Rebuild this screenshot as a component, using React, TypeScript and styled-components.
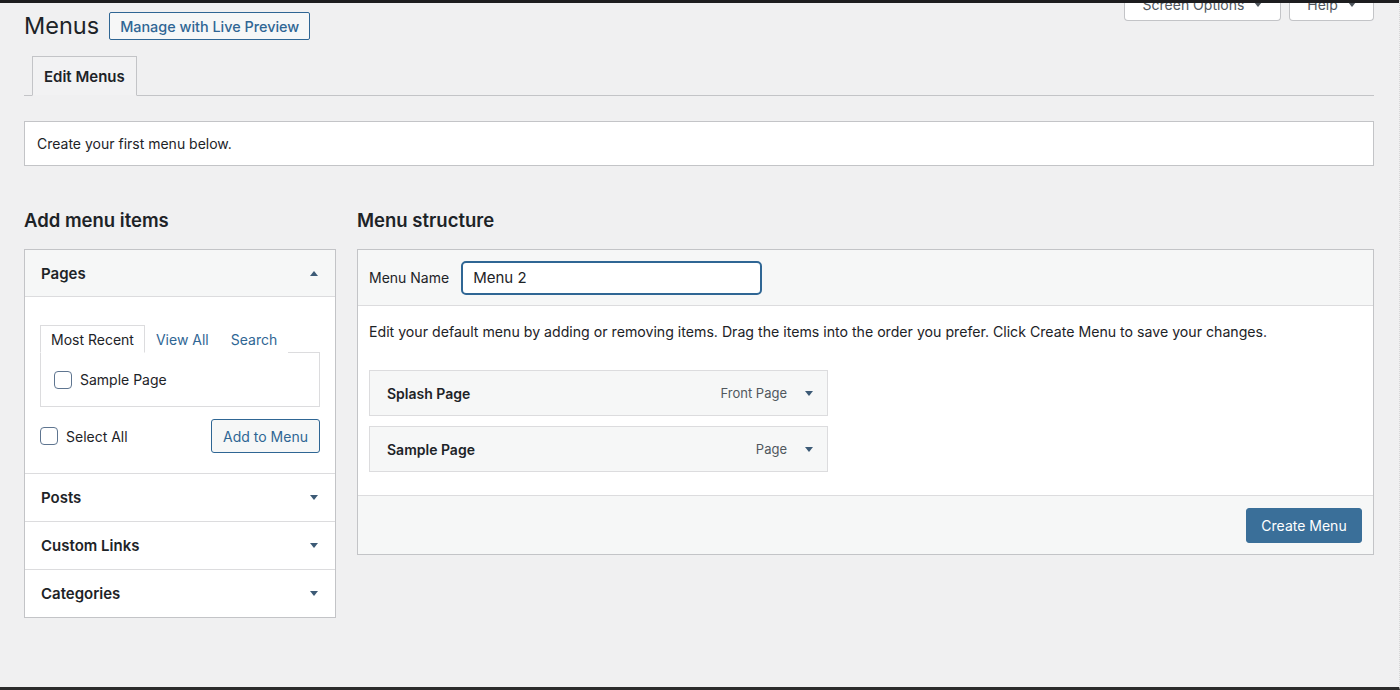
import React from "react";
import styled, { createGlobalStyle } from "styled-components";

const Global = createGlobalStyle`
  html, body { margin: 0; padding: 0; background: #f0f0f1; }
  body {
    font-family: Inter, "Liberation Sans", Arial, sans-serif;
    font-size: 14px;
    color: #1d2327;
  }
  * { box-sizing: border-box; }
`;

const Frame = styled.div`
  width: 1400px;
  height: 690px;
  overflow: hidden;
  display: flex;
  flex-direction: column;
  background: #f0f0f1;
  border-bottom: 3px solid #2c2c2c;
  border-right: 1px dotted #d6d6d6;
`;

const TopBar = styled.div`
  height: 3px;
  background: #1d1d1f;
  position: relative;
  z-index: 3;
  flex: none;
`;

const Wrap = styled.div`
  position: relative;
  flex: 1;
  padding: 6px 25px 0 24px;
`;

const ScreenMeta = styled.div`
  position: absolute;
  top: -8px;
  right: 25px;
  display: flex;
  gap: 8px;
`;

const MetaButton = styled.button<{ $w: number }>`
  width: ${(p) => p.$w}px;
  height: 26px;
  padding: 0 0 6px;
  display: flex;
  align-items: center;
  justify-content: center;
  gap: 10px;
  background: #fff;
  border: 1px solid #c3c4c7;
  border-top: none;
  border-radius: 0 0 4px 4px;
  font: inherit;
  font-size: 14px;
  color: #50575e;
`;

const Caret = styled.span<{ $up?: boolean; $color?: string }>`
  display: inline-block;
  width: 0;
  height: 0;
  border-left: 4px solid transparent;
  border-right: 4px solid transparent;
  ${(p) =>
    p.$up
      ? `border-bottom: 5px solid ${p.$color || "#3c5a76"};`
      : `border-top: 5px solid ${p.$color || "#3c5a76"};`}
`;

const TitleRow = styled.div`
  display: flex;
  align-items: center;
  gap: 10px;
  height: 34px;
`;

const PageTitle = styled.h1`
  margin: 0;
  font-size: 23.5px;
  font-weight: 400;
  line-height: 30px;
  color: #1d2327;
`;

const OutlineButton = styled.button`
  height: 28px;
  padding: 0 10px;
  background: #f6f7f7;
  border: 1px solid #2f6694;
  border-radius: 2px;
  font: inherit;
  font-size: 14.4px;
  font-weight: 500;
  color: #2f6694;
`;

const TabWrapper = styled.div`
  margin-top: 13px;
  border-bottom: 1px solid #c3c4c7;
  padding-left: 8px;
  display: flex;
`;

const NavTab = styled.div`
  height: 40px;
  margin-bottom: -1px;
  padding: 0 11px;
  display: flex;
  align-items: center;
  border: 1px solid #c3c4c7;
  border-bottom-color: #f0f0f1;
  background: #f2f2f3;
  font-size: 15px;
  font-weight: 600;
  color: #1d2327;
`;

const Notice = styled.div`
  margin-top: 25px;
  height: 45px;
  padding: 0 12px;
  display: flex;
  align-items: center;
  background: #fff;
  border: 1px solid #c3c4c7;
  font-size: 14px;
`;

const Columns = styled.div`
  margin-top: 41px;
  display: grid;
  grid-template-columns: 312px 1fr;
  column-gap: 21px;
`;

const Column = styled.div`
  display: flex;
  flex-direction: column;
`;

const ColumnTitle = styled.h2`
  margin: 0 0 16px;
  font-size: 18.5px;
  font-weight: 600;
  line-height: 26px;
  color: #1d2327;
`;

const Accordion = styled.div`
  border: 1px solid #c3c4c7;
  background: #fff;
`;

const Section = styled.div`
  & + & {
    border-top: 1px solid #dcdcde;
  }
`;

const SectionHead = styled.div<{ $open?: boolean }>`
  height: 47px;
  padding: 0 17px 0 16px;
  display: flex;
  align-items: center;
  justify-content: space-between;
  background: ${(p) => (p.$open ? "#f6f7f7" : "#fff")};
  border-bottom: ${(p) => (p.$open ? "1px solid #dcdcde" : "none")};
  font-size: 15px;
  font-weight: 600;
  color: #1d2327;
`;

const SectionBody = styled.div`
  padding: 28px 15px 20px 15px;
`;

const Tabs = styled.div`
  display: flex;
  align-items: flex-end;
`;

const Tab = styled.div<{ $active?: boolean }>`
  height: 28px;
  padding: 0 10px;
  display: flex;
  align-items: center;
  margin-bottom: -1px;
  font-size: 14px;
  color: ${(p) => (p.$active ? "#1d2327" : "#2f6694")};
  background: #fff;
  border: 1px solid ${(p) => (p.$active ? "#dcdcde" : "transparent")};
  border-bottom-color: ${(p) => (p.$active ? "#fff" : "transparent")};
  position: relative;
`;

const TabPanel = styled.div`
  border: 1px solid #dcdcde;
  height: 55px;
  padding: 0 13px;
  display: flex;
  align-items: center;
`;

const CheckRow = styled.label`
  display: flex;
  align-items: center;
  gap: 8px;
  font-size: 14px;
  color: #1d2327;
`;

const Check = styled.span`
  width: 18px;
  height: 18px;
  border: 1px solid #5e7590;
  border-radius: 4px;
  background: #fff;
  flex: none;
`;

const BoxFooter = styled.div`
  margin-top: 12px;
  display: flex;
  align-items: center;
  justify-content: space-between;
`;

const SecondaryButton = styled.button`
  width: 109px;
  height: 34px;
  padding: 0;
  background: #f6f7f7;
  border: 1px solid #2f6694;
  border-radius: 3px;
  font: inherit;
  font-size: 14px;
  color: #2f6694;
`;

const MenuBox = styled.div`
  border: 1px solid #c3c4c7;
  background: #fff;
`;

const MenuHeader = styled.div`
  height: 56px;
  padding: 0 11px;
  display: flex;
  align-items: center;
  gap: 12px;
  background: #f6f7f7;
  border-bottom: 1px solid #dcdcde;
  font-size: 14px;
`;

const NameInput = styled.input`
  width: 301px;
  height: 34px;
  padding: 0 10px;
  border: 2px solid #2f6694;
  border-radius: 5px;
  font: inherit;
  font-size: 15px;
  color: #1d2327;
  background: #fff;
  outline: none;
`;

const MenuBody = styled.div`
  padding: 16px 11px 23px;
  display: flex;
  flex-direction: column;
`;

const Hint = styled.p`
  margin: 0 0 28px;
  font-size: 14.15px;
  line-height: 20px;
`;

const ItemList = styled.div`
  display: flex;
  flex-direction: column;
  gap: 10px;
`;

const Item = styled.div`
  width: 459px;
  height: 46px;
  padding: 0 14px 0 17px;
  display: flex;
  align-items: center;
  background: #f6f7f7;
  border: 1px solid #dcdcde;
`;

const ItemTitle = styled.span`
  flex: 1;
  font-size: 14px;
  font-weight: 600;
  color: #1d2327;
`;

const ItemType = styled.span`
  font-size: 13px;
  color: #50575e;
  margin-right: 18px;
`;

const MenuFooter = styled.div`
  height: 59px;
  padding: 0 11px;
  display: flex;
  align-items: center;
  justify-content: flex-end;
  background: #f6f7f7;
  border-top: 1px solid #dcdcde;
`;

const PrimaryButton = styled.button`
  width: 116px;
  height: 35px;
  padding: 0;
  background: #3a6f99;
  border: 1px solid #3a6f99;
  border-radius: 3px;
  font: inherit;
  font-size: 14px;
  color: #fff;
`;

const collapsed = ["Posts", "Custom Links", "Categories"];

const items = [
  { title: "Splash Page", type: "Front Page" },
  { title: "Sample Page", type: "Page" },
];

export default function App() {
  return (
    <>
      <Global />
      <Frame>
        <TopBar />
        <Wrap>
          <ScreenMeta>
            <MetaButton $w={157}>
              Screen Options <Caret $color="#50575e" />
            </MetaButton>
            <MetaButton $w={85}>
              Help <Caret $color="#50575e" />
            </MetaButton>
          </ScreenMeta>

          <TitleRow>
            <PageTitle>Menus</PageTitle>
            <OutlineButton>Manage with Live Preview</OutlineButton>
          </TitleRow>

          <TabWrapper>
            <NavTab>Edit Menus</NavTab>
          </TabWrapper>

          <Notice>Create your first menu below.</Notice>

          <Columns>
            <Column>
              <ColumnTitle>Add menu items</ColumnTitle>
              <Accordion>
                <Section>
                  <SectionHead $open>
                    Pages <Caret $up />
                  </SectionHead>
                  <SectionBody>
                    <Tabs>
                      <Tab $active>Most Recent</Tab>
                      <Tab>View All</Tab>
                      <Tab>Search</Tab>
                    </Tabs>
                    <TabPanel>
                      <CheckRow>
                        <Check />
                        Sample Page
                      </CheckRow>
                    </TabPanel>
                    <BoxFooter>
                      <CheckRow>
                        <Check />
                        Select All
                      </CheckRow>
                      <SecondaryButton>Add to Menu</SecondaryButton>
                    </BoxFooter>
                  </SectionBody>
                </Section>
                {collapsed.map((t) => (
                  <Section key={t}>
                    <SectionHead>
                      {t} <Caret />
                    </SectionHead>
                  </Section>
                ))}
              </Accordion>
            </Column>

            <Column>
              <ColumnTitle>Menu structure</ColumnTitle>
              <MenuBox>
                <MenuHeader>
                  Menu Name
                  <NameInput defaultValue="Menu 2" />
                </MenuHeader>
                <MenuBody>
                  <Hint>
                    Edit your default menu by adding or removing items. Drag the items into the order you
                    prefer. Click Create Menu to save your changes.
                  </Hint>
                  <ItemList>
                    {items.map((it) => (
                      <Item key={it.title}>
                        <ItemTitle>{it.title}</ItemTitle>
                        <ItemType>{it.type}</ItemType>
                        <Caret />
                      </Item>
                    ))}
                  </ItemList>
                </MenuBody>
                <MenuFooter>
                  <PrimaryButton>Create Menu</PrimaryButton>
                </MenuFooter>
              </MenuBox>
            </Column>
          </Columns>
        </Wrap>
      </Frame>
    </>
  );
}
